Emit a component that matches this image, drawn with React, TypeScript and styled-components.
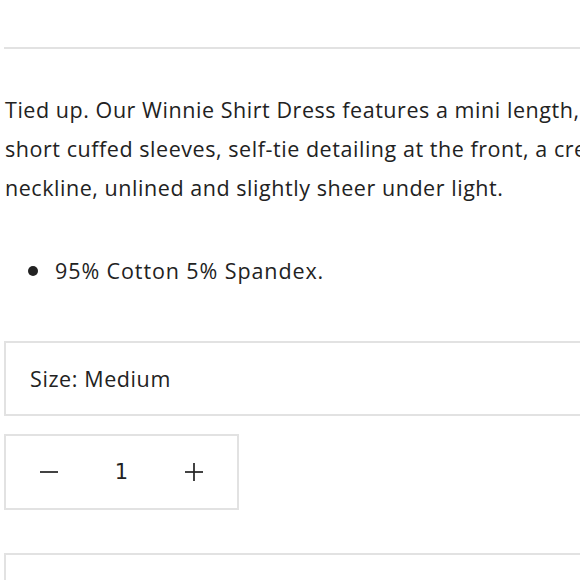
import React, { useState } from 'react';
import styled, { createGlobalStyle } from 'styled-components';

const GlobalStyle = createGlobalStyle`
  html, body {
    margin: 0;
    padding: 0;
    background: #ffffff;
    overflow: hidden;
  }
  body {
    font-family: "Open Sans", "Noto Sans", sans-serif;
    color: #222222;
  }
`;

const Page = styled.div`
  width: 640px;
  padding: 47px 0 0 4px;
  box-sizing: border-box;
`;

const Divider = styled.hr`
  margin: 0;
  border: none;
  height: 2px;
  background: #e2e2e2;
`;

const Description = styled.p`
  margin: 41px 0 0;
  padding-left: 1px;
  white-space: nowrap;
  font-size: 21.5px;
  letter-spacing: 0.55px;
  line-height: 39px;
  color: #222222;
`;

const Features = styled.ul`
  margin: 44px 0 0;
  padding: 0;
  list-style: none;
  font-size: 21.5px;
  letter-spacing: 0.9px;
  line-height: 39px;
`;

const Feature = styled.li`
  display: flex;
  align-items: center;
  gap: 17px;
  padding-left: 24px;

  &::before {
    content: '';
    width: 10px;
    height: 10px;
    border-radius: 50%;
    background: #222222;
  }
`;

const SelectBox = styled.div<{ $height?: number }>`
  box-sizing: border-box;
  display: flex;
  align-items: center;
  height: ${(p) => p.$height ?? 75}px;
  padding: 0 24px;
  border: 2px solid #e2e2e2;
  border-right: none;
  font-size: 21.5px;
  letter-spacing: 0.6px;
  color: #222222;
`;

const SizeBox = styled(SelectBox)`
  margin-top: 51px;
`;

const Quantity = styled.div`
  box-sizing: border-box;
  margin-top: 18px;
  width: 235px;
  height: 76px;
  padding: 0 34px;
  border: 2px solid #e2e2e2;
  display: flex;
  justify-content: space-between;
  align-items: center;
`;

const StepButton = styled.button`
  background: none;
  border: none;
  padding: 0;
  cursor: pointer;
  display: flex;
  justify-content: center;
  align-items: center;
  color: #222222;
`;

const Count = styled.span`
  text-align: center;
  font-size: 21px;
  font-family: "DejaVu Sans", "Noto Sans", sans-serif;
  color: #222222;
`;

const NextBox = styled(SelectBox)`
  margin-top: 43px;
`;

export default function App() {
  const [qty, setQty] = useState(1);
  return (
    <>
      <GlobalStyle />
      <Page>
        <Divider />
        <Description>
          Tied up. Our Winnie Shirt Dress features a mini length,
          <br />
          short cuffed sleeves, self-tie detailing at the front, a crew
          <br />
          neckline, unlined and slightly sheer under light.
        </Description>
        <Features>
          <Feature>95% Cotton 5% Spandex.</Feature>
        </Features>
        <SizeBox>Size: Medium</SizeBox>
        <Quantity>
          <StepButton aria-label="Decrease" onClick={() => setQty((q) => Math.max(1, q - 1))}>
            <svg width="18" height="18" viewBox="0 0 18 18">
              <line x1="0" y1="9" x2="18" y2="9" stroke="currentColor" strokeWidth="1.7" />
            </svg>
          </StepButton>
          <Count>{qty}</Count>
          <StepButton aria-label="Increase" onClick={() => setQty((q) => q + 1)}>
            <svg width="18" height="18" viewBox="0 0 18 18">
              <line x1="0" y1="9" x2="18" y2="9" stroke="currentColor" strokeWidth="1.7" />
              <line x1="9" y1="0" x2="9" y2="18" stroke="currentColor" strokeWidth="1.7" />
            </svg>
          </StepButton>
        </Quantity>
        <NextBox $height={75} />
      </Page>
    </>
  );
}
